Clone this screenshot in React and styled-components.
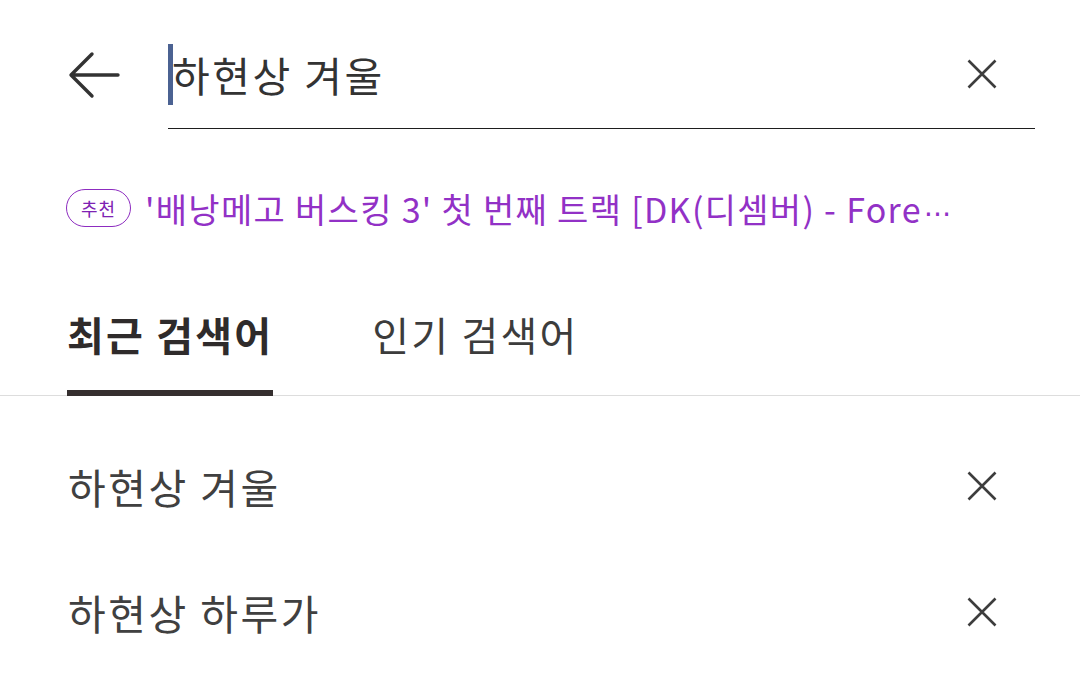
import React, { useState } from "react";
import styled, { createGlobalStyle } from "styled-components";

const GlobalStyle = createGlobalStyle`
  html, body {
    margin: 0;
    padding: 0;
    background: #ffffff;
  }
  body {
    font-family: "Noto Sans CJK KR", "Noto Sans", sans-serif;
    color: #333333;
  }
`;

const Page = styled.div`
  width: 1080px;
  height: 695px;
  overflow: hidden;
  background: #ffffff;
`;

const Header = styled.div`
  display: flex;
  align-items: stretch;
  padding: 20px 45px 0 66px;
`;

const BackButton = styled.button`
  width: 102px;
  padding: 0;
  border: 0;
  background: none;
  display: flex;
  align-items: center;
  cursor: pointer;
`;

const SearchField = styled.div`
  flex: 1;
  height: 108px;
  border-bottom: 1.5px solid #1e1e1e;
  display: flex;
  align-items: center;
`;

const Caret = styled.span`
  width: 5px;
  height: 61px;
  background: #4b6292;
  flex-shrink: 0;
`;

const Query = styled.span`
  flex: 1;
  font-size: 41px;
  letter-spacing: 2.5px;
  line-height: 1;
  color: #333333;
  margin-left: -1px;
  white-space: nowrap;
`;

const ClearButton = styled.button`
  width: 30px;
  height: 30px;
  padding: 0;
  border: 0;
  background: none;
  margin-right: ${(p) => p.$right || 0}px;
  display: flex;
  align-items: center;
  justify-content: center;
  cursor: pointer;
`;

const Suggest = styled.div`
  display: flex;
  align-items: center;
  gap: 14px;
  padding: 60px 40px 0 66px;
  height: 38px;
  box-sizing: content-box;
`;

const Badge = styled.span`
  flex-shrink: 0;
  width: 65px;
  height: 38px;
  box-sizing: border-box;
  border: 1.5px solid #8d2cc0;
  border-radius: 19px;
  display: flex;
  align-items: center;
  justify-content: center;
  font-size: 18px;
  font-weight: 400;
  letter-spacing: 1px;
  color: #7e22b3;
`;

const SuggestText = styled.span`
  font-size: 34px;
  letter-spacing: 1.3px;
  color: #9231c6;
  white-space: nowrap;
  min-width: 0;
`;

const Ellipsis = styled.span`
  font-family: "DejaVu Sans", sans-serif;
  font-size: 28px;
  letter-spacing: 0;
  margin-left: 2px;
`;

const Tabs = styled.div`
  display: flex;
  gap: 99px;
  margin-top: 61px;
  padding-left: 67px;
  border-bottom: 1px solid #dddddd;
`;

const Tab = styled.button`
  padding: 0 0 10px;
  border: 0;
  background: none;
  font-family: inherit;
  font-size: 40px;
  letter-spacing: 2.2px;
  line-height: 92px;
  font-weight: ${(p) => (p.$active ? 700 : 400)};
  color: ${(p) => (p.$active ? "#2f2b2b" : "#3c3c3c")};
  border-bottom: 6px solid ${(p) => (p.$active ? "#352f2f" : "transparent")};
  margin-bottom: -1px;
  cursor: pointer;
`;

const List = styled.ul`
  list-style: none;
  margin: 0;
  padding: 27px 0 0;
`;

const Row = styled.li`
  height: 126px;
  display: flex;
  align-items: center;
  padding: 0 83px 0 68px;
`;

const RowText = styled.span`
  flex: 1;
  font-size: 41px;
  letter-spacing: 2.5px;
  color: #404040;
`;

function CloseIcon() {
  return (
    <svg width="30" height="30" viewBox="0 0 30 30">
      <path
        d="M1.5 1.5 L28.5 28.5 M28.5 1.5 L1.5 28.5"
        stroke="#3d3d3d"
        strokeWidth="2.6"
        fill="none"
      />
    </svg>
  );
}

function BackIcon() {
  return (
    <svg width="54" height="48" viewBox="0 0 54 48">
      <path
        d="M52 24 H6 M26 3 L5 24 L26 45"
        stroke="#333333"
        strokeWidth="3.4"
        fill="none"
        strokeLinecap="round"
        strokeLinejoin="round"
      />
    </svg>
  );
}

export default function App() {
  const [tab, setTab] = useState("recent");
  const recent = ["하현상 겨울", "하현상 하루가"];

  return (
    <Page>
      <GlobalStyle />
      <Header>
        <BackButton aria-label="뒤로">
          <BackIcon />
        </BackButton>
        <SearchField>
          <Caret />
          <Query>하현상 겨울</Query>
          <ClearButton $right={38} aria-label="지우기">
            <CloseIcon />
          </ClearButton>
        </SearchField>
      </Header>
      <Suggest>
        <Badge>추천</Badge>
        <SuggestText>
          '배낭메고 버스킹 3' 첫 번째 트랙 [DK(디셈버) - Fore
          <Ellipsis>⋯</Ellipsis>
        </SuggestText>
      </Suggest>
      <Tabs>
        <Tab $active={tab === "recent"} onClick={() => setTab("recent")}>
          최근 검색어
        </Tab>
        <Tab $active={tab === "popular"} onClick={() => setTab("popular")}>
          인기 검색어
        </Tab>
      </Tabs>
      <List>
        {recent.map((q) => (
          <Row key={q}>
            <RowText>{q}</RowText>
            <ClearButton aria-label="삭제">
              <CloseIcon />
            </ClearButton>
          </Row>
        ))}
      </List>
    </Page>
  );
}
